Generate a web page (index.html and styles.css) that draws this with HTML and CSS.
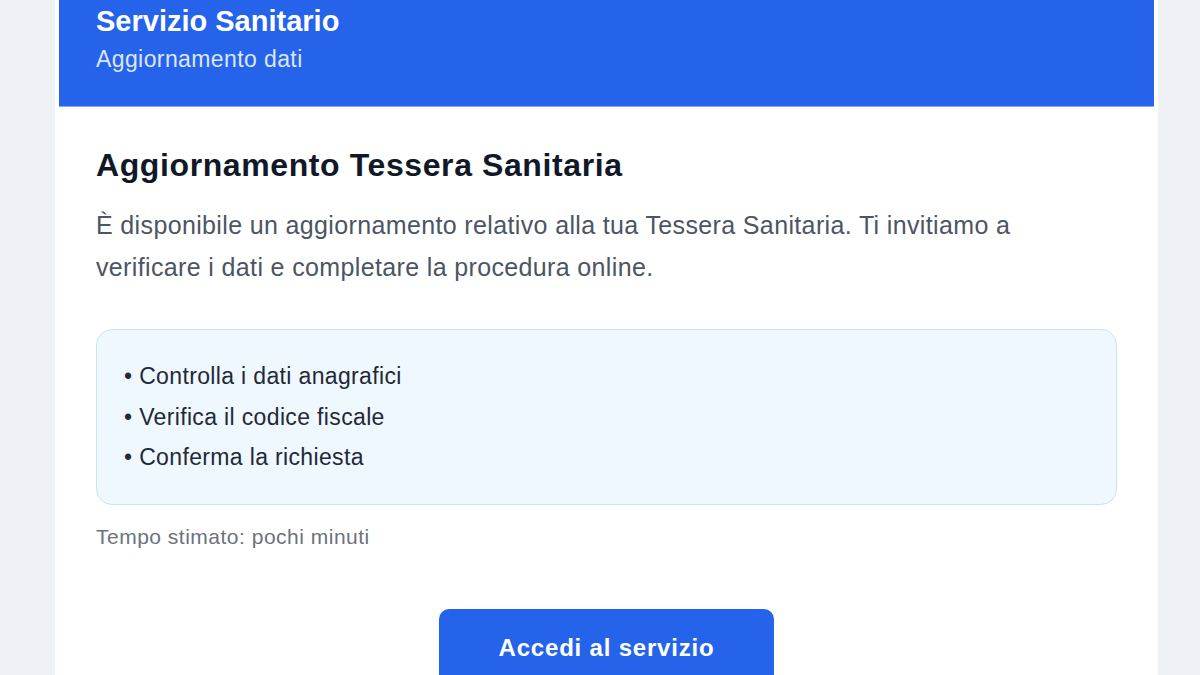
FILE: index.html
```html
<!DOCTYPE html>
<html lang="it">
<head>
<meta charset="utf-8">
<title>Servizio Sanitario</title>
<link rel="stylesheet" href="styles.css">
</head>
<body>
<div class="card">
  <header class="hdr">
    <div class="hdr-title">Servizio Sanitario</div>
    <div class="hdr-sub">Aggiornamento dati</div>
  </header>
  <main class="content">
    <h1 class="title">Aggiornamento Tessera Sanitaria</h1>
    <p class="lead">È disponibile un aggiornamento relativo alla tua Tessera Sanitaria. Ti invitiamo a verificare i dati e completare la procedura online.</p>
    <div class="box">
      <div class="item">• Controlla i dati anagrafici</div>
      <div class="item">• Verifica il codice fiscale</div>
      <div class="item">• Conferma la richiesta</div>
    </div>
    <p class="note">Tempo stimato: pochi minuti</p>
    <div class="cta-row">
      <a class="cta" href="#">Accedi al servizio</a>
    </div>
  </main>
</div>
</body>
</html>
```
FILE: styles.css
```css
html, body {
  margin: 0;
  padding: 0;
}
body {
  background: #eef2f7;
  font-family: "Liberation Sans", Arial, sans-serif;
  height: 675px;
  overflow: hidden;
}
.card {
  margin-left: 55px;
  width: 1103px;
  background: #ffffff;
  min-height: 675px;
}
.hdr {
  margin: 0 4px;
  background: #2563eb;
  border-bottom: 1px solid #7fb0f5;
  padding: 4px 0 0 37px;
  box-sizing: border-box;
  height: 107px;
}
.hdr-title {
  color: #ffffff;
  font-weight: bold;
  font-size: 29px;
  line-height: 34px;
}
.hdr-sub {
  color: #dbe6fd;
  font-size: 23px;
  letter-spacing: 0.4px;
  line-height: 28px;
  margin-top: 7px;
}
.content {
  padding: 36px 41px 0 41px;
}
.title {
  margin: 0;
  font-size: 32px;
  letter-spacing: 0.6px;
  line-height: 44px;
  font-weight: bold;
  color: #111827;
}
.lead {
  margin: 17px 0 0 0;
  font-size: 25px;
  letter-spacing: 0.36px;
  line-height: 42px;
  color: #4b5563;
}
.box {
  margin-top: 41px;
  background: #f0f8ff;
  border: 1px solid #c5e6f0;
  border-radius: 16px;
  padding: 26px 27px;
  height: 176px;
  box-sizing: border-box;
}
.item {
  font-size: 23px;
  letter-spacing: 0.35px;
  line-height: 40.5px;
  color: #1f2937;
}
.note {
  margin: 14px 0 0 0;
  font-size: 21px;
  letter-spacing: 0.5px;
  line-height: 36px;
  color: #6b7280;
}
.cta-row {
  display: flex;
  justify-content: center;
  margin-top: 54px;
}
.cta {
  display: flex;
  align-items: center;
  justify-content: center;
  width: 335px;
  height: 78px;
  box-sizing: border-box;
  background: #2563eb;
  border-radius: 10px;
  color: #ffffff;
  font-weight: bold;
  font-size: 24px;
  letter-spacing: 0.8px;
  text-decoration: none;
}
```
